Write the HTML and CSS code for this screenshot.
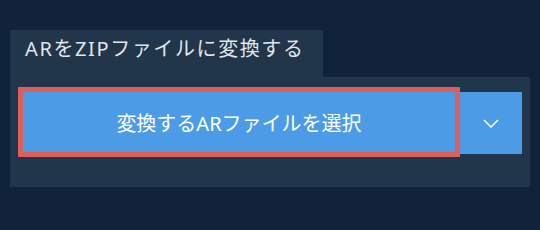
FILE: index.html
```html
<!DOCTYPE html>
<html lang="ja">

<head>
    <meta charset="UTF-8">
    <meta name="viewport" content="width=device-width, initial-scale=1.0">
    <title>ARをZIPファイルに変換する</title>
    <link rel="stylesheet" href="styles.css">
</head>

<body>
    <div class="container">
        <div class="tab">
            <h2 class="tab-title">ARをZIPファイルに変換する</h2>
        </div>
        <div class="panel">
            <div class="row">
                <button class="btn select-btn">変換するARファイルを選択</button>
                <button class="btn drop-btn" aria-label="その他">
                    <svg width="16" height="9" viewBox="0 0 16 9">
                        <path d="M1 1 L8 8 L15 1" fill="none" stroke="#ffffff" stroke-width="1.5" />
                    </svg>
                </button>
            </div>
        </div>
    </div>
</body>

</html>
```

FILE: styles.css
```css
* {
    margin: 0;
    padding: 0;
    box-sizing: border-box;
}

body {
    background-color: #11233a;
    font-family: "Noto Sans", "Noto Sans CJK JP", sans-serif;
}

.container {
    width: 540px;
    padding: 30px 10px 0 10px;
}

.tab {
    width: 313px;
    height: 47px;
    background-color: #21354b;
    padding-left: 15px;
}

.tab-title {
    font-size: 20px;
    font-weight: 400;
    color: #e2e6ea;
    line-height: 38px;
    letter-spacing: 1.6px;
}

.panel {
    width: 520px;
    height: 110px;
    background-color: #21354b;
    padding: 15px 8px 0 13px;
}

.row {
    display: flex;
    align-items: flex-start;
}

.btn {
    border: none;
    background-color: #4c9be7;
    color: #ffffff;
    font-family: "Noto Sans", "Noto Sans CJK JP", sans-serif;
    cursor: pointer;
}

.select-btn {
    width: 432px;
    height: 60px;
    font-size: 20px;
    outline: 5px solid #dd5f5c;
}

.drop-btn {
    width: 62px;
    height: 62px;
    margin-left: 5px;
    display: flex;
    align-items: center;
    justify-content: center;
}
```
